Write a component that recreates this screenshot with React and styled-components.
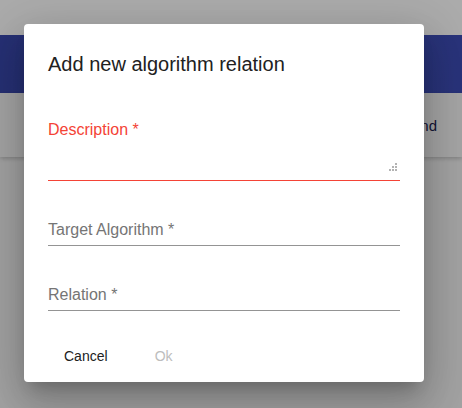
import React from 'react';
import styled, { createGlobalStyle } from 'styled-components';

const GlobalStyle = createGlobalStyle`
  html, body {
    margin: 0;
    padding: 0;
    background: #fafafa;
    font-family: "Liberation Sans", Arial, sans-serif;
  }
`;

const Page = styled.div`
  width: 462px;
  height: 408px;
  overflow: hidden;
  position: relative;
  background: #f2f2f2;
`;

const TopStrip = styled.div`
  height: 35px;
  background: #ffffff;
`;

const AppBar = styled.header`
  height: 58px;
  background: linear-gradient(90deg, #3a48ad 0%, #3e4db6 100%);
`;

const SubBar = styled.div`
  height: 64px;
  display: flex;
  align-items: center;
  justify-content: flex-end;
  padding-right: 25px;
  background: #f5f5f5;
  box-shadow: 0 2px 4px rgba(0, 0, 0, 0.18);
  position: relative;
  color: #1c2250;
  font-size: 15px;
`;

const Overlay = styled.div`
  position: absolute;
  inset: 0;
  background: rgba(0, 0, 0, 0.33);
  padding: 24px;
  display: flex;
  align-items: flex-start;
  justify-content: flex-start;
`;

const Dialog = styled.div`
  width: 400px;
  height: 358px;
  background: #fff;
  border-radius: 4px;
  display: flex;
  flex-direction: column;
  box-shadow: 0px 11px 15px -7px rgba(0, 0, 0, 0.2),
    0px 24px 38px 3px rgba(0, 0, 0, 0.14),
    0px 9px 46px 8px rgba(0, 0, 0, 0.12);
`;

const Title = styled.h2`
  margin: 0;
  padding: 24px 24px 20px;
  font-size: 20px;
  line-height: 32px;
  font-weight: 400;
  color: #212121;
`;

const Content = styled.div`
  padding: 0 24px;
`;

const Field = styled.div`
  position: relative;
  margin-top: ${p => (p.first ? '0' : '24px')};
  padding-top: ${p => (p.first ? '22px' : '17px')};
  padding-bottom: 7px;
  border-bottom: 1px solid ${p => (p.error ? '#f44336' : '#949494')};
`;

const Label = styled.label`
  display: block;
  font-size: 16px;
  line-height: 16px;
  color: ${p => (p.error ? '#f44336' : '#757575')};
`;

const TextArea = styled.div`
  position: relative;
  height: 35px;
`;

const Grip = styled.svg`
  position: absolute;
  right: 2px;
  bottom: 1px;
`;

const Actions = styled.div`
  margin-top: auto;
  margin-bottom: 8px;
  padding: 0 24px;
  display: flex;
  gap: 8px;
`;

const Button = styled.button`
  height: 36px;
  min-width: 64px;
  padding: 0 16px;
  border: none;
  background: none;
  font-family: inherit;
  font-size: 14px;
  color: ${p => (p.disabled ? '#bdbdbd' : '#212121')};
  cursor: ${p => (p.disabled ? 'default' : 'pointer')};
`;

const ResizeGrip = () => (
  <Grip width="9" height="9" viewBox="0 0 9 9">
    {[[6, 0], [3, 3], [6, 3], [0, 6], [3, 6], [6, 6]].map(([x, y]) => (
      <rect key={`${x}-${y}`} x={x} y={y} width="2" height="2" fill="#b3b3b3" />
    ))}
  </Grip>
);

const App = () => (
  <>
    <GlobalStyle />
    <Page>
      <TopStrip />
      <AppBar />
      <SubBar>Add relation and</SubBar>
      <Overlay>
        <Dialog>
          <Title>Add new algorithm relation</Title>
          <Content>
            <Field first error>
              <Label error>Description *</Label>
              <TextArea>
                <ResizeGrip />
              </TextArea>
            </Field>
            <Field>
              <Label>Target Algorithm *</Label>
            </Field>
            <Field>
              <Label>Relation *</Label>
            </Field>
          </Content>
          <Actions>
            <Button>Cancel</Button>
            <Button disabled>Ok</Button>
          </Actions>
        </Dialog>
      </Overlay>
    </Page>
  </>
);

export default App;
